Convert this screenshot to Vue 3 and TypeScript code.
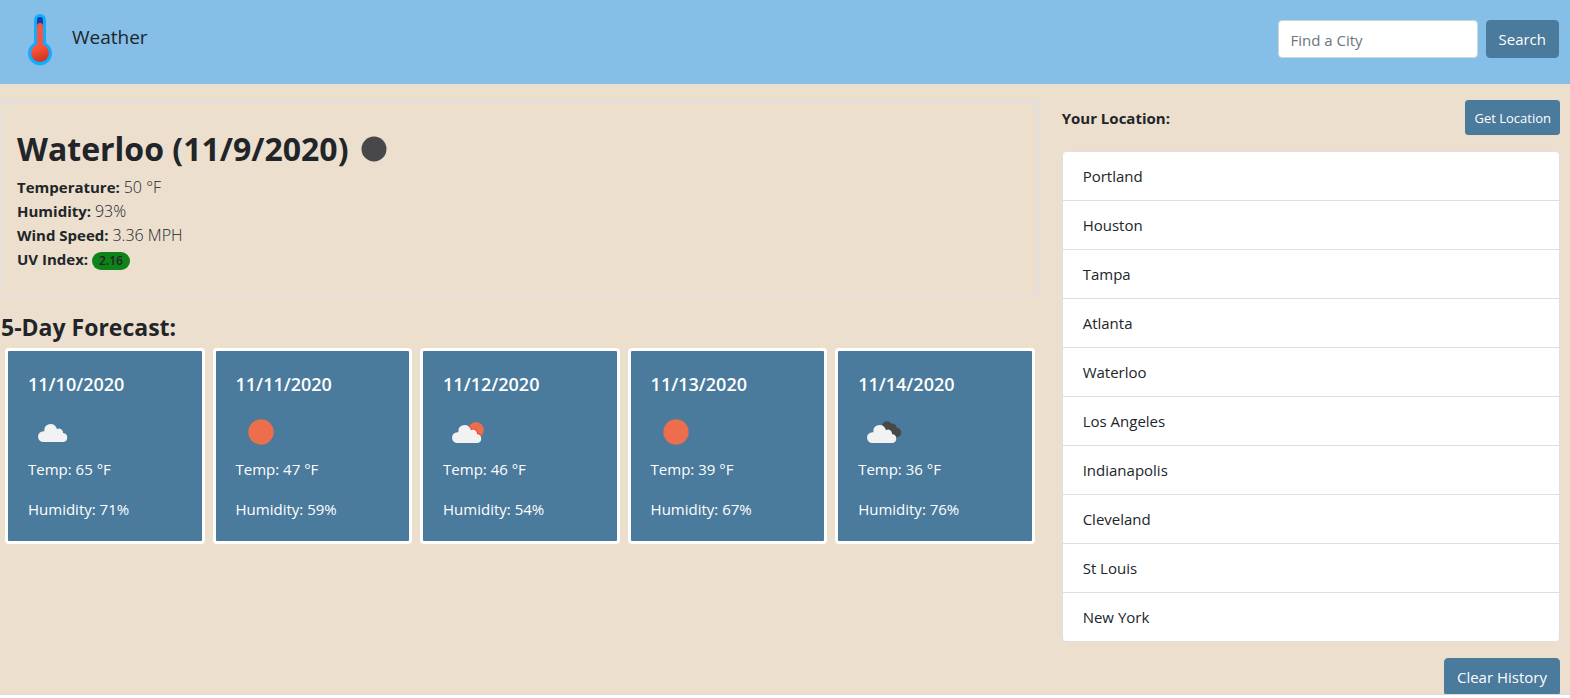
<script setup lang="ts">
import { ref } from 'vue'

type Sky = 'cloud' | 'sun' | 'partly' | 'broken'

interface Day {
  date: string
  sky: Sky
  temp: number
  humidity: number
}

const query = ref('')

// Cloud silhouette, 30 by 19 units: flat base, tall lobe, small lobe, right lobe
const cloud =
  'M5.400 19a5.400 5.400 0 0 1 0-10.800h1a6.300 6.300 0 0 1 11.900-3.600 5 5 0 0 1 .7 1.600 3.900 3.900 0 0 1 6 3.700 4.600 4.600 0 0 1 .5 9.100z'

const days: Day[] = [
  { date: '11/10/2020', sky: 'cloud', temp: 65, humidity: 71 },
  { date: '11/11/2020', sky: 'sun', temp: 47, humidity: 59 },
  { date: '11/12/2020', sky: 'partly', temp: 46, humidity: 54 },
  { date: '11/13/2020', sky: 'sun', temp: 39, humidity: 67 },
  { date: '11/14/2020', sky: 'broken', temp: 36, humidity: 76 },
]

const cities = ref<string[]>([
  'Portland',
  'Houston',
  'Tampa',
  'Atlanta',
  'Waterloo',
  'Los Angeles',
  'Indianapolis',
  'Cleveland',
  'St Louis',
  'New York',
])

function addCity() {
  const name = query.value.trim()
  if (name) cities.value.unshift(name)
  query.value = ''
}
</script>

<template>
  <div class="page">
    <div class="view">
      <header class="navbar">
        <a class="brand" href="#">
          <svg class="logo" viewBox="0 0 24 52" aria-hidden="true">
            <defs>
              <linearGradient id="bulb" x1="0" y1="0" x2="0.4" y2="1">
                <stop offset="0.3" stop-color="#f8553c" />
                <stop offset="1" stop-color="#d0361e" />
              </linearGradient>
            </defs>
            <path d="M6 6a6 6 0 0 1 12 0v23a12 12 0 1 1-12 0z" fill="#10acff" />
            <path d="M9 6a3 3 0 0 1 6 0v8H9z" fill="#1540ab" />
            <path d="M9 12a3 3 0 0 1 6 0v19H9z" fill="#f8553c" />
            <circle cx="12" cy="39" r="9" fill="url(#bulb)" />
          </svg>
          <span>Weather</span>
        </a>
        <form class="search" @submit.prevent="addCity">
          <input v-model="query" type="search" placeholder="Find a City" aria-label="Find a City" />
          <button class="btn" type="submit">Search</button>
        </form>
      </header>

      <div class="columns">
        <main class="main">
          <section class="current">
            <h1>
              Waterloo (11/9/2020)
              <svg class="sky" viewBox="0 0 50 50" aria-hidden="true">
                <circle cx="25" cy="25" r="12.500" fill="#48484a" />
              </svg>
            </h1>
            <p><strong>Temperature:</strong> <span class="value">50 °F</span></p>
            <p><strong>Humidity:</strong> <span class="value">93%</span></p>
            <p><strong>Wind Speed:</strong> <span class="value">3.36 MPH</span></p>
            <p><strong>UV Index:</strong> <span class="badge">2.16</span></p>
          </section>

          <h2>5-Day Forecast:</h2>
          <section class="forecast">
            <article v-for="day in days" :key="day.date" class="card">
              <h3>{{ day.date }}</h3>
              <svg class="sky" viewBox="0 0 50 50" aria-hidden="true">
                <circle v-if="day.sky === 'sun'" cx="25" cy="25" r="12.700" fill="#ec6e4c" />
                <path
                  v-if="day.sky === 'cloud'"
                  :d="cloud"
                  transform="translate(10 16)"
                  fill="#f2f2f2"
                />
                <template v-if="day.sky === 'partly'">
                  <clipPath id="sun-disc">
                    <circle cx="33" cy="23" r="8" />
                  </clipPath>
                  <g clip-path="url(#sun-disc)">
                    <circle cx="33" cy="23" r="8" fill="#ec6e4c" />
                    <path
                      :d="cloud"
                      transform="translate(9 17)"
                      fill="none"
                      stroke="#e8472c"
                      stroke-width="2"
                    />
                  </g>
                  <path :d="cloud" transform="translate(9 17)" fill="#f2f2f2" />
                </template>
                <template v-if="day.sky === 'broken'">
                  <path
                    d="M24 18a5.300 5.300 0 0 1 9.600-1.200 3.900 3.900 0 0 1 5 4 4.700 4.700 0 1 1-1.400 9.200L30 27z"
                    fill="#48484a"
                  />
                  <path :d="cloud" transform="translate(9 17)" fill="#f2f2f2" />
                </template>
              </svg>
              <p>Temp: {{ day.temp }} °F</p>
              <p>Humidity: {{ day.humidity }}%</p>
            </article>
          </section>
        </main>

        <aside class="side">
          <div class="location">
            <strong>Your Location:</strong>
            <button class="btn btn-small" type="button">Get Location</button>
          </div>
          <ul class="history">
            <li v-for="city in cities" :key="city">{{ city }}</li>
          </ul>
          <button class="btn clear" type="button" @click="cities = []">Clear History</button>
        </aside>
      </div>
    </div>
    <footer class="edge"></footer>
  </div>
</template>

<style>
body {
  margin: 0;
}
</style>

<style scoped>
* {
  box-sizing: border-box;
}

.page {
  display: flex;
  flex-direction: column;
  height: 100vh;
  color: #212529;
  font-family: 'Segoe UI', 'Open Sans', 'Noto Sans', sans-serif;
  font-size: 15px;
  line-height: 24px;
}

.view {
  flex: 1;
  min-height: 0;
  overflow: hidden;
  background: #ecdfce;
}

.edge {
  height: 4px;
  border-top: 1px solid #dcdcdf;
  background: #fff;
}

h1,
h2,
h3,
p,
ul {
  margin: 0;
  padding: 0;
}

.navbar {
  display: flex;
  align-items: flex-start;
  justify-content: space-between;
  height: 84px;
  padding: 12px 11px 12px 28px;
  background: #85bfe8;
}

.brand {
  display: flex;
  gap: 20px;
  color: #212529;
  font-size: 19px;
  line-height: 50px;
  text-decoration: none;
}

.logo {
  width: 24px;
  height: 52px;
  margin-top: 2px;
}

.search {
  display: flex;
  gap: 8px;
  padding-top: 8px;
}

.search input {
  width: 200px;
  height: 38px;
  padding: 2px 12px 0;
  border: 1px solid #ced4da;
  border-radius: 4px;
  background: #fff;
  color: #495057;
  font: inherit;
  appearance: none;
}

.search input::placeholder {
  color: #6c757d;
  opacity: 1;
}

.btn {
  height: 38px;
  padding: 0 12px;
  border: 1px solid #4a7a9c;
  border-radius: 4px;
  background: #4a7a9c;
  color: #fff;
  font: inherit;
  white-space: nowrap;
}

.btn-small {
  height: 35px;
  padding: 0 8px;
  border-radius: 3px;
  font-size: 13px;
}

.columns {
  display: grid;
  grid-template-columns: 2fr 1fr;
  padding-top: 16px;
}

.main {
  padding: 0 8px 0 1px;
}

.current {
  height: 196px;
  padding: 16px 15px;
  border: 1px solid #dfdfe4;
  border-width: 2px 2px 1px 1px;
}

h1 {
  display: flex;
  align-items: center;
  height: 57px;
  padding-top: 4px;
  font-size: 32px;
  font-weight: 700;
  line-height: 38px;
}

.sky {
  display: block;
  flex: none;
  width: 50px;
  height: 50px;
}

.value {
  font-size: 16px;
  font-weight: 300;
}

.badge {
  display: inline-block;
  padding: 0 7px;
  border-radius: 9px;
  background: #0f821a;
  font-size: 12px;
  font-weight: 600;
  line-height: 18px;
}

h2 {
  margin: 15px 0 5px;
  font-size: 23px;
  font-weight: 700;
  line-height: 32px;
}

.forecast {
  display: grid;
  grid-template-columns: repeat(5, 1fr);
  gap: 8px;
  padding: 0 4px;
}

.card {
  padding: 20px;
  border: 3px solid #fff;
  border-radius: 4px;
  background: #4a7a9c;
  color: #fff;
}

.card h3 {
  margin-bottom: 10px;
  font-size: 18px;
  font-weight: 600;
  line-height: 26px;
}

.card p {
  margin-bottom: 16px;
}

.card p:last-child {
  margin-bottom: 0;
}

.side {
  display: flex;
  flex-direction: column;
  padding: 0 10px 0 15px;
}

.location {
  display: flex;
  align-items: center;
  justify-content: space-between;
  margin-bottom: 16px;
}

.history {
  border: 1px solid #dfdfdf;
  border-radius: 4px;
  background: #fff;
  list-style: none;
}

.history li {
  padding: 12px 20px;
}

.history li + li {
  border-top: 1px solid #dfdfdf;
}

.clear {
  align-self: flex-end;
  margin-top: 16px;
}
</style>
